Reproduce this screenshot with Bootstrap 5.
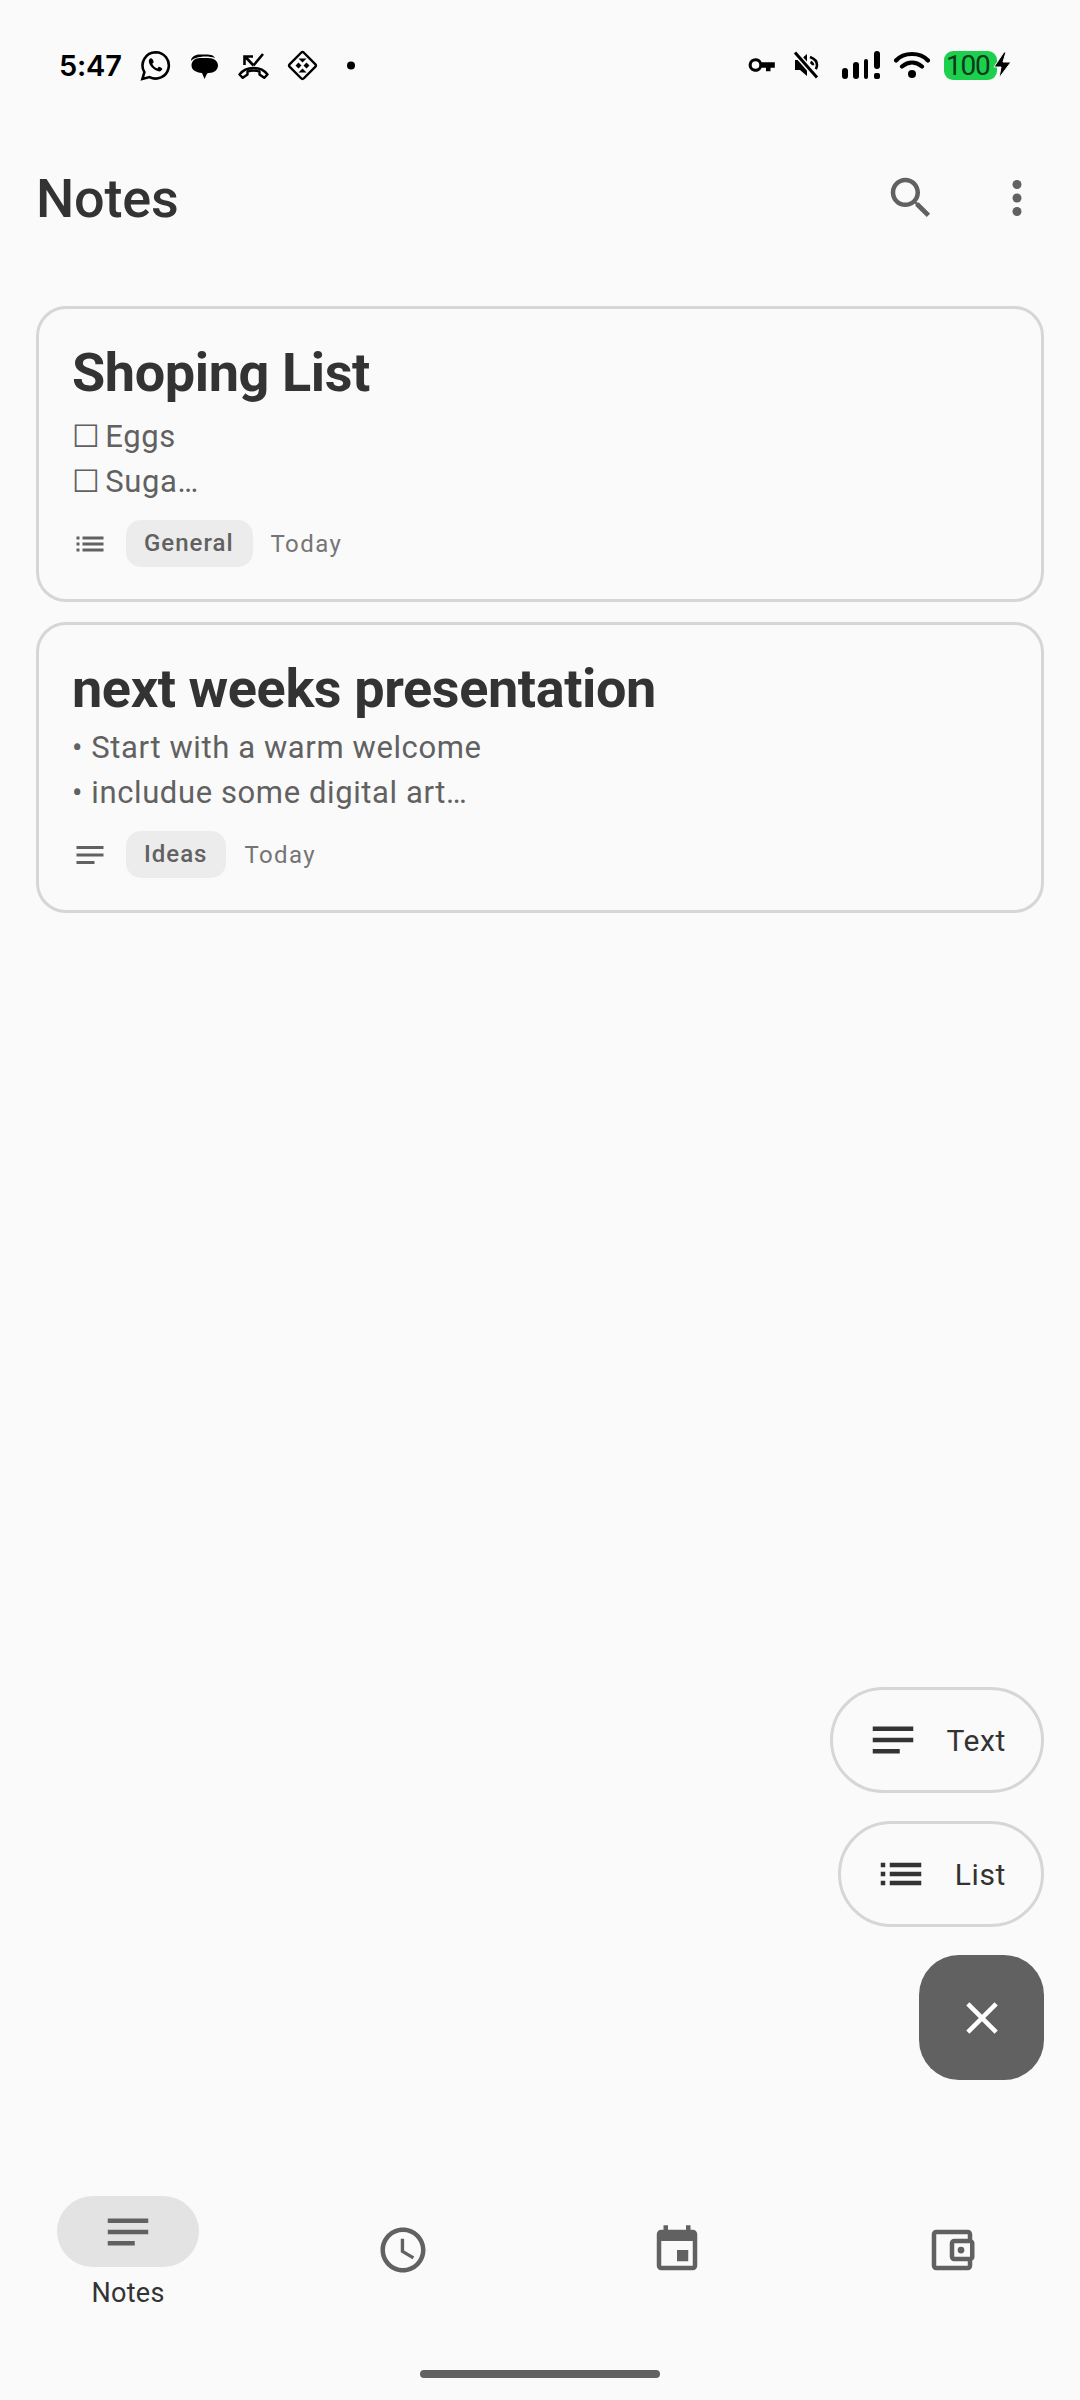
<!DOCTYPE html>
<html lang="en">
<head>
    <meta charset="UTF-8">
    <meta name="viewport" content="width=device-width, initial-scale=1.0">
    <title>Notes</title>
    <link rel="stylesheet" href="https://cdn.jsdelivr.net/npm/bootstrap@5.3.0/dist/css/bootstrap.min.css">
    <style>
        html, body { height: 100%; }
        body { background: #fafafa; color: #333; font-family: Roboto, "Noto Sans", sans-serif; width: 1080px; min-height: 2400px; }
        svg { display: block; flex: none; fill: currentColor; }
        /* status bar */
        .status-bar { height: 130px; padding: 0 68px 0 59px; color: #000; }
        .status-time { font-size: 29px; font-weight: 600; line-height: 1; font-family: Inter, Roboto, sans-serif; letter-spacing: -.2px; }
        .status-left { gap: 18px; }
        .battery-pill { width: 53px; height: 29px; background: #1ccf4c; border-radius: 9px; font-size: 28px; line-height: 29px; letter-spacing: -1.2px; color: #0c3a1a; font-family: Roboto, sans-serif; padding-left: 2px; }
        .bolt { margin-left: -4px; }
        .sp-14 { margin-left: 14px; }
        .sp-16 { margin-left: 16px; }
        .sp-22 { margin-left: 22px; }
        /* app bar */
        .app-bar { height: 136px; padding: 0 36px; }
        .app-title { font-size: 54px; font-weight: 500; color: #333; line-height: 1; margin: 2px 0 0; letter-spacing: -.2px; }
        .bar-icons { color: #616161; gap: 52px; }
        /* note cards */
        .notes-list { padding: 0 36px; margin-top: 40px; gap: 20px; }
        .note-card { background: transparent; border: 3px solid #d6d6d6; border-radius: 30px; padding: 32px 33px 32px; }
        .note-title { font-size: 54px; font-weight: 700; line-height: 64px; color: #333; margin: 0; letter-spacing: -.4px; }
        .note-body { font-size: 31px; line-height: 45px; color: #616161; letter-spacing: .6px; }
        .note-body.is-check { margin-top: 9px; }
        .note-body.is-text { margin-top: 4px; }
        .check-mark { letter-spacing: -1.2px; }
        .note-meta { margin-top: 16px; height: 47px; color: #616161; }
        .tag-chip { background: #ececec; border-radius: 15px; height: 47px; line-height: 47px; padding: 0 19px 0 18px; font-size: 24px; font-weight: 500; color: #616161; letter-spacing: 1px; margin-left: 18px; }
        .note-date { font-size: 24px; color: #757575; letter-spacing: 1.4px; margin-left: 18px; }
        /* fab menu */
        .fab-stack { padding-right: 36px; gap: 28px; margin-top: auto; }
        .fab-pill { height: 106px; border: 3px solid #d6d6d6; border-radius: 53px; background: transparent; color: #333; font-size: 30px; letter-spacing: .6px; padding: 0 35px 0 33px; gap: 27px; }
        .fab-close { width: 125px; height: 125px; background: #616161; border: 0; border-radius: 40px; color: #fff; }
        /* bottom nav */
        .bottom-nav { padding: 0 57px; margin-top: 116px; height: 174px; }
        .nav-slot { width: 142px; color: #616161; }
        .nav-pill { width: 142px; height: 71px; border-radius: 36px; }
        .nav-pill.is-on { background: #e3e3e3; }
        .nav-pill.is-off { margin-top: 18px; }
        .nav-name { font-size: 27px; font-weight: 400; color: #333; line-height: 1; margin-top: 13px; letter-spacing: .3px; }
        .home-bar { width: 240px; height: 8px; border-radius: 4px; background: #616161; margin: 0 auto 22px; }
    </style>
</head>
<body class="d-flex flex-column">
    <!-- status bar -->
    <div class="status-bar d-flex align-items-center justify-content-between">
        <div class="d-flex align-items-center status-left">
            <span class="status-time">5:47</span>
            <svg width="31" height="31" viewBox="0 0 31 31"><path d="M15.700 2.200A13.200 13.200 0 0 0 4.400 22.100L2.400 29l7.100-1.900A13.200 13.200 0 1 0 15.700 2.200z" fill="none" stroke="currentColor" stroke-width="2.600"/><path d="M10.800 8.300c-1 .1-2 1.300-2 3 .1 3 4 8.800 9.500 10 2 .4 3.800-.8 4-2.500.1-.5-3-2.200-3.500-2l-1.500 1.700c-2-.6-4.300-2.900-5-4.800l1.400-1.500c.2-.5-1.300-3.600-1.900-3.700z"/></svg>
            <svg width="31" height="31" viewBox="0 0 31 31"><path d="M2 11c0-4 4-6.500 9-6.500h7c4 0 7 1 8 3.500-5-2-14-2-19 0-2 .8-4 1.700-5 3z"/><path d="M11 8h8c6 0 10 3 10 7.500S25 23 20 23c-1 0-1.500.2-2 .7L15.500 29 13 23C7 22.500 2.500 20 2.500 15.500 2.500 11 6 8 11 8z"/></svg>
            <svg width="31" height="31" viewBox="0 0 31 31"><path d="M15.500 15.500 7.500 7M6.500 15V6.500H15M15.500 15.500 25 4" fill="none" stroke="currentColor" stroke-width="2.600"/><path d="M1.500 24.500C4.500 20.500 9 18 15.500 18s11 2.500 14 6.500l-3.300 3.300-4.700-3.300v-2.800c-3.800-1.400-8.200-1.400-12 0v2.800l-4.700 3.300z" fill="none" stroke="currentColor" stroke-width="2.400" stroke-linejoin="round"/></svg>
            <svg width="31" height="31" viewBox="0 0 31 31"><rect x="5.500" y="5.500" width="20" height="20" rx="2" transform="rotate(45 15.500 15.500)" fill="none" stroke="currentColor" stroke-width="2.400"/><path d="M11.500 8.500h8l-4 4zM11.500 22.500h8l-4-4zM8.500 15.500l3-3 3 3-3 3zM16.500 15.500l3-3 3 3-3 3z"/></svg>
            <svg width="31" height="31" viewBox="0 0 31 31"><circle cx="15" cy="15.500" r="4"/></svg>
        </div>
        <div class="d-flex align-items-center">
            <svg width="28" height="16" viewBox="0 0 28 16"><path d="M7.500 1.200a6.800 6.800 0 1 0 6.200 9.500H18v3.500h4.500v-3.500h4.300V5.300H13.700a6.800 6.800 0 0 0-6.200-4.100zm0 3a3.800 3.800 0 1 1 0 7.600 3.800 3.800 0 0 1 0-7.600z" fill-rule="evenodd"/></svg>
            <svg class="sp-16" width="28" height="28" viewBox="0 0 28 28"><path d="M3 9h5l7-6v22l-7-6H3z"/><path d="M18 6c4 1.500 7 4.500 7 8 0 1.500-.5 3-1.200 4.200M18.500 11c1.500.7 2.500 1.800 2.500 3.300" fill="none" stroke="currentColor" stroke-width="2.600"/><path d="M3 1.500l22 25" stroke="#fafafa" stroke-width="6"/><path d="M3 1.500l22 25" stroke="currentColor" stroke-width="3"/></svg>
            <svg class="sp-22" width="38" height="28" viewBox="0 0 38 28"><rect x="0" y="17" width="6" height="11" rx="3"/><rect x="11" y="11" width="6" height="17" rx="3"/><rect x="22" y="8" width="4" height="20" rx="2"/><rect x="32" y="0" width="6" height="18" rx="3"/><rect x="32" y="22" width="6" height="6" rx="2"/></svg>
            <svg class="sp-14" width="36" height="28" viewBox="0 0 36 28"><path d="M2 9.500C6 5 12 3 18 3s12 2 16 6.500M8 15.500c3-2.500 6.500-4 10-4s7 1.500 10 4" fill="none" stroke="currentColor" stroke-width="4.200" stroke-linecap="round"/><circle cx="18" cy="23" r="4"/></svg>
            <div class="battery-pill sp-14">100</div>
            <svg class="bolt" width="19" height="28" viewBox="0 0 19 28"><path d="M11 1 1 16h7l-2 11 12-16h-8l3-10z" stroke="#fafafa" stroke-width="1"/></svg>
        </div>
    </div>

    <!-- app bar -->
    <div class="app-bar d-flex align-items-center justify-content-between">
        <h1 class="app-title">Notes</h1>
        <div class="d-flex align-items-center bar-icons">
            <svg width="54" height="54" viewBox="0 0 24 24"><path d="M15.500 14h-.79l-.28-.27C15.410 12.590 16 11.110 16 9.500 16 5.910 13.090 3 9.500 3S3 5.910 3 9.500 5.910 16 9.500 16c1.610 0 3.090-.59 4.230-1.570l.27.28v.79l5 4.990L20.490 19l-4.990-5zm-6 0C7.010 14 5 11.990 5 9.500S7.010 5 9.500 5 14 7.010 14 9.500 11.990 14 9.500 14z"/></svg>
            <svg width="54" height="54" viewBox="0 0 24 24"><circle cx="12" cy="6" r="2"/><circle cx="12" cy="12" r="2"/><circle cx="12" cy="18" r="2"/></svg>
        </div>
    </div>

    <!-- notes -->
    <div class="notes-list d-flex flex-column">
        <div class="card note-card">
            <h2 class="note-title">Shoping List</h2>
            <div class="note-body is-check"><span class="check-mark">☐ </span>Eggs<br><span class="check-mark">☐ </span>Suga…</div>
            <div class="note-meta d-flex align-items-center">
                <svg width="36" height="36" viewBox="0 0 24 24"><path d="M3 13h2v-2H3v2zm0 4h2v-2H3v2zm0-8h2V7H3v2zm4 4h14v-2H7v2zm0 4h14v-2H7v2zM7 7v2h14V7H7z"/></svg>
                <span class="tag-chip">General</span>
                <span class="note-date">Today</span>
            </div>
        </div>
        <div class="card note-card">
            <h2 class="note-title">next weeks presentation</h2>
            <div class="note-body is-text">• Start with a warm welcome<br>• includue some digital art…</div>
            <div class="note-meta d-flex align-items-center">
                <svg width="36" height="36" viewBox="0 0 24 24"><path d="M3 6h18v2H3zM3 11h18v2H3zM3 16h12v2H3z"/></svg>
                <span class="tag-chip">Ideas</span>
                <span class="note-date">Today</span>
            </div>
        </div>
    </div>

    <!-- fab menu -->
    <div class="fab-stack d-flex flex-column align-items-end">
        <button type="button" class="btn fab-pill d-flex align-items-center">
            <svg width="54" height="54" viewBox="0 0 24 24"><path d="M3 6h18v2H3zM3 11h18v2H3zM3 16h12v2H3z"/></svg>
            Text
        </button>
        <button type="button" class="btn fab-pill d-flex align-items-center">
            <svg width="54" height="54" viewBox="0 0 24 24"><path d="M3 13h2v-2H3v2zm0 4h2v-2H3v2zm0-8h2V7H3v2zm4 4h14v-2H7v2zm0 4h14v-2H7v2zM7 7v2h14V7H7z"/></svg>
            List
        </button>
        <button type="button" class="btn fab-close d-flex align-items-center justify-content-center p-0">
            <svg width="54" height="54" viewBox="0 0 24 24"><path d="M19 6.410 17.590 5 12 10.590 6.410 5 5 6.410 10.590 12 5 17.590 6.410 19 12 13.410 17.590 19 19 17.590 13.410 12z"/></svg>
        </button>
    </div>

    <!-- bottom nav -->
    <div class="bottom-nav d-flex justify-content-between align-items-start">
        <div class="nav-slot d-flex flex-column align-items-center">
            <div class="nav-pill is-on d-flex align-items-center justify-content-center">
                <svg width="54" height="54" viewBox="0 0 24 24"><path d="M3 6h18v2H3zM3 11h18v2H3zM3 16h12v2H3z"/></svg>
            </div>
            <span class="nav-name">Notes</span>
        </div>
        <div class="nav-slot d-flex flex-column align-items-center">
            <div class="nav-pill is-off d-flex align-items-center justify-content-center">
                <svg width="54" height="54" viewBox="0 0 24 24"><path d="M11.990 2C6.470 2 2 6.480 2 12s4.470 10 9.990 10C17.520 22 22 17.520 22 12S17.520 2 11.990 2zM12 20c-4.420 0-8-3.580-8-8s3.580-8 8-8 8 3.580 8 8-3.580 8-8 8zm.5-13H11v6l5.250 3.150.75-1.230-4.500-2.670z"/></svg>
            </div>
        </div>
        <div class="nav-slot d-flex flex-column align-items-center">
            <div class="nav-pill is-off d-flex align-items-center justify-content-center">
                <svg width="54" height="54" viewBox="0 0 24 24"><path d="M17 12h-5v5h5v-5zM16 1v2H8V1H6v2H5c-1.110 0-1.990.9-1.990 2L3 19c0 1.100.89 2 2 2h14c1.100 0 2-.9 2-2V5c0-1.100-.9-2-2-2h-1V1h-2zm3 18H5V8h14v11z"/></svg>
            </div>
        </div>
        <div class="nav-slot d-flex flex-column align-items-center">
            <div class="nav-pill is-off d-flex align-items-center justify-content-center">
                <svg width="54" height="54" viewBox="0 0 24 24"><path d="M21 7.280V5c0-1.100-.9-2-2-2H5c-1.110 0-2 .9-2 2v14c0 1.100.89 2 2 2h14c1.100 0 2-.9 2-2v-2.280c.59-.35 1-.98 1-1.720V9c0-.74-.41-1.380-1-1.720zM20 9v6h-7V9h7zM5 19V5h14v2h-6c-1.100 0-2 .9-2 2v6c0 1.100.9 2 2 2h6v2H5z"/><circle cx="16" cy="12" r="1.500"/></svg>
            </div>
        </div>
    </div>
    <div class="home-bar"></div>

    <script src="https://cdn.jsdelivr.net/npm/bootstrap@5.3.0/dist/js/bootstrap.bundle.min.js"></script>
</body>
</html>
